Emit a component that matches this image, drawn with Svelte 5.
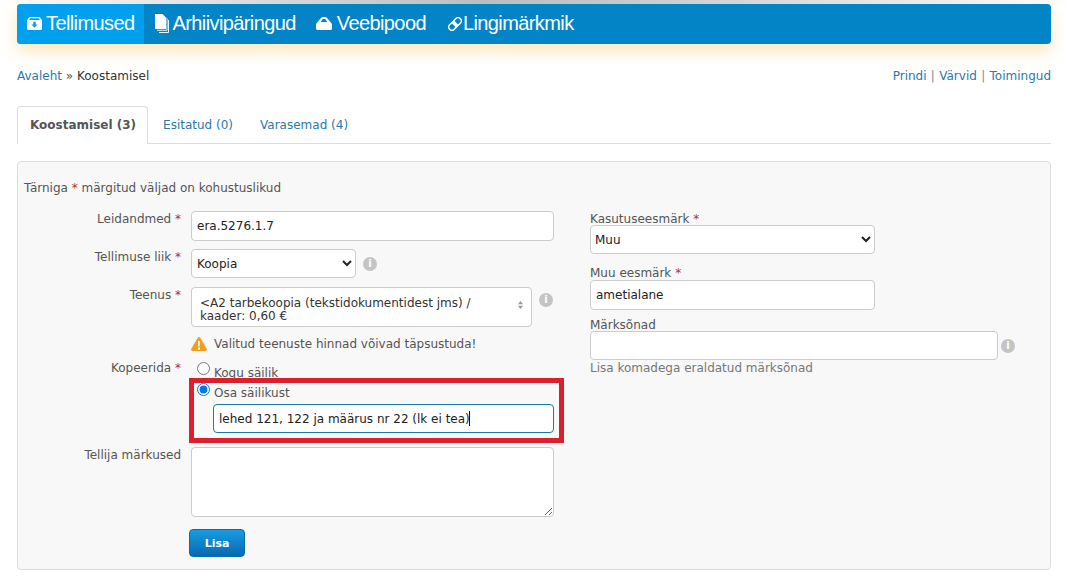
<script>
	const required = '*';
</script>

<div class="top-fade"></div>
<div class="page">
	<nav class="mainnav">
		<a class="item active" href="#t">
			<svg viewBox="0 0 15 13" width="15" height="13"><path fill="#fff" fill-rule="evenodd" d="M2.500 0h10L15 3v8.500A1.500 1.500 0 0 1 13.500 13h-12A1.500 1.500 0 0 1 0 11.500V3zM3 1.200 2.200 3h10.600L12 1.200z"/><path fill="#00a0ef" d="M6.300 4.800h2.400v2.700h1.800L7.500 10.800 4.500 7.500h1.800z"/></svg>
			Tellimused
		</a>
		<a class="item second" href="#a">
			<svg viewBox="0 0 14 19" width="14" height="19"><path fill="#fff" d="M0 0h7.500L11 3.500V15H0z"/><path fill="none" stroke="#fff" stroke-width=".9" d="M12 4v12.300H2M13.500 6v12.500H4"/></svg>
			Arhiivipäringud
		</a>
		<a class="item" href="#v">
			<svg class="ic-shop" viewBox="0 0 16 13" width="16" height="13"><path fill="#fff" fill-rule="evenodd" d="M0 7 4.500 1.500Q5.500 0 7 0h2q1.500 0 2.500 1.500L16 7v4.500q0 1.500-1.500 1.500h-13Q0 13 0 11.500zM4.800 5h6.400L9.800 2.800Q9.400 2 8.600 2H7.400q-.8 0-1.200.8z"/></svg>
			Veebipood
		</a>
		<a class="item" href="#l">
			<svg class="ic-link" viewBox="0 0 14 14" width="14" height="14"><g transform="rotate(-45 7 7)"><rect x="-.5" y="3.800" width="15" height="6.400" rx="3.200" fill="none" stroke="#fff" stroke-width="1.500"/><rect x="5.200" y="3.800" width="3.600" height="6.400" fill="#fff"/></g></svg>
			Lingimärkmik
		</a>
	</nav>

	<div class="crumbs">
		<div><a href="#h">Avaleht</a> » <span class="here">Koostamisel</span></div>
		<div class="actions"><a href="#p">Prindi</a> <i>|</i> <a href="#c">Värvid</a> <i>|</i> <a href="#m">Toimingud</a></div>
	</div>

	<div class="tabs">
		<span class="tab current">Koostamisel (3)</span>
		<a class="tab" href="#e">Esitatud (0)</a>
		<a class="tab" href="#v">Varasemad (4)</a>
	</div>

	<section class="panel">
		<p class="note">Tärniga <span class="req">{required}</span> märgitud väljad on kohustuslikud</p>
		<div class="cols">
			<div class="left">
				<div class="row">
					<label for="find">Leidandmed <span class="req">*</span></label>
					<input id="find" class="w-full" value="era.5276.1.7" />
				</div>
				<div class="row r-type">
					<label for="type">Tellimuse liik <span class="req">*</span></label>
					<div class="with-info">
						<select id="type" class="w-type"><option>Koopia</option></select>
						<span class="info">i</span>
					</div>
				</div>
				<div class="row r-service">
					<span class="lbl">Teenus <span class="req">*</span></span>
					<div class="with-info top">
						<div class="service">
							<span>&lt;A2 tarbekoopia (tekstidokumentidest jms) / kaader: 0,60 €</span>
							<svg viewBox="0 0 7 11" width="5" height="8"><path fill="#999" d="M3.500 0 7 4.500H0zM3.500 11 0 6.500h7z"/></svg>
						</div>
						<span class="info">i</span>
					</div>
				</div>
				<div class="row r-warn">
					<span></span>
					<div class="warn">
						<svg viewBox="0 0 16 14" width="16" height="14"><path fill="#f0a020" d="M8 0q.8 0 1.300.8l6.400 11q.7 1.700-1 2.200H1.300q-1.700-.5-1-2.200L6.700.8Q7.200 0 8 0z"/><path fill="#fff" d="M7 4h2l-.3 5.500H7.300zM7 10.500h2V12.500H7z"/></svg>
						Valitud teenuste hinnad võivad täpsustuda!
					</div>
				</div>
				<div class="row r-copy">
					<span class="lbl">Kopeerida <span class="req">*</span></span>
					<div class="options">
						<label class="radio first"><input type="radio" name="copy" /> <span>Kogu säilik</span></label>
						<label class="radio second"><input type="radio" name="copy" checked /> <span>Osa säilikust</span></label>
						<div class="part">
							<input value="lehed 121, 122 ja määrus nr 22 (lk ei tea)" />
							<span class="caret"></span>
						</div>
						<div class="highlight"></div>
					</div>
				</div>
				<div class="row r-notes">
					<label for="notes">Tellija märkused</label>
					<textarea id="notes"></textarea>
				</div>
				<button class="submit">Lisa</button>
			</div>

			<div class="right">
				<label for="use">Kasutuseesmärk <span class="req">*</span></label>
				<select id="use" class="w-right"><option>Muu</option></select>
				<label for="other" class="gap-a">Muu eesmärk <span class="req">*</span></label>
				<input id="other" class="w-right tall" value="ametialane" />
				<label for="tags" class="gap-b">Märksõnad</label>
				<div class="with-info tags">
					<input id="tags" class="w-tags" />
					<span class="info">i</span>
				</div>
				<span class="hint">Lisa komadega eraldatud märksõnad</span>
			</div>
		</div>
	</section>
</div>

<style>
	:global(body) {
		background: #fff;
		font-family: 'DejaVu Sans', sans-serif;
		font-size: 12px;
		color: #555;
	}

	a {
		color: #2a7aa8;
		text-decoration: none;
	}

	.top-fade {
		height: 4px;
		background: linear-gradient(to right, #fff 0%, #b9bec2 45%, #c2c6c9 55%, #fff 100%);
	}

	.page {
		margin: 0 20px 0 17px;
		height: 577px;
	}

	.mainnav {
		display: flex;
		height: 40px;
		background: #0284c7;
		border-radius: 4px;
		overflow: hidden;
		box-shadow: 0 7px 16px rgba(250, 210, 120, 0.5);
		font-family: 'Liberation Sans', sans-serif;
		font-size: 20px;
		letter-spacing: -0.6px;
	}

	.mainnav .item {
		display: flex;
		align-items: center;
		gap: 4px;
		padding: 0 10px 1px;
		color: #fff;
	}

	.mainnav .active {
		background: #00a0ef;
	}

	.mainnav .second {
		padding-left: 11px;
		gap: 3px;
	}

	.ic-shop {
		margin-right: 1px;
	}

	.ic-link {
		margin: 0 -3px 0 2px;
	}

	.crumbs {
		display: flex;
		justify-content: space-between;
		margin-top: 25px;
		line-height: 15px;
	}

	.here {
		color: #333;
	}

	.actions {
		color: #888;
	}

	.actions i {
		font-style: normal;
		margin: 0 0.5px;
	}

	.tabs {
		display: flex;
		height: 37px;
		margin-top: 22px;
		border-bottom: 1px solid #ddd;
	}

	.tab {
		padding: 12px 13px 0;
		line-height: 15px;
		margin-right: 1px;
	}

	.tab.current {
		height: 38px;
		box-sizing: border-box;
		background: #fff;
		border: 1px solid #ddd;
		border-bottom: 0;
		border-radius: 4px 4px 0 0;
		font-weight: bold;
		color: #555;
		padding: 11px 11px 0 12px;
		margin-right: 2px;
	}

	.panel {
		margin-top: 17px;
		height: 409px;
		box-sizing: border-box;
		background: #f8f8f8;
		border: 1px solid #ddd;
		border-radius: 4px;
		padding: 19px 6px 0;
	}

	.note {
		margin: 0;
		line-height: 15px;
	}

	.req {
		color: #a33;
	}

	.cols {
		display: flex;
		margin-top: 15px;
	}

	.left {
		width: 566px;
	}

	.row {
		display: grid;
		grid-template-columns: 157px auto;
		column-gap: 10px;
		justify-content: start;
	}

	.row label:first-child,
	.lbl {
		text-align: right;
		line-height: 15px;
		padding-top: 1px;
	}

	input:not([type='radio']),
	select,
	textarea {
		box-sizing: border-box;
		background: #fff;
		border: 1px solid #ccc;
		border-radius: 4px;
		font: inherit;
		color: #222;
		margin: 0;
		padding: 0 5px;
		outline: none;
	}

	select {
		padding: 0;
	}

	.w-full {
		width: 363px;
		height: 30px;
	}

	.r-type {
		margin-top: 8px;
	}

	.w-type {
		width: 165px;
		height: 29px;
		padding-left: 1px;
	}

	.with-info {
		display: flex;
		align-items: center;
		gap: 7px;
	}

	.with-info.top {
		align-items: flex-start;
	}

	.with-info.top .info {
		margin-top: 6px;
	}

	.info {
		width: 14px;
		height: 14px;
		border-radius: 50%;
		background: #c4c4c4;
		color: #fff;
		font-size: 10px;
		font-weight: bold;
		line-height: 14px;
		text-align: center;
	}

	.r-service {
		margin-top: 9px;
	}

	.service {
		display: flex;
		align-items: center;
		justify-content: space-between;
		width: 341px;
		height: 40px;
		box-sizing: border-box;
		background: #fff;
		border: 1px solid #ccc;
		border-radius: 4px;
		padding: 5px 8px 0;
		line-height: 13px;
		color: #333;
	}

	.service span {
		width: 310px;
	}

	.service svg {
		margin-top: -9px;
	}

	.r-warn {
		margin-top: 9px;
	}

	.warn {
		display: flex;
		align-items: center;
		gap: 7px;
		height: 16px;
	}

	.r-copy {
		margin-top: 8px;
	}

	.options {
		position: relative;
		display: flex;
		flex-direction: column;
		align-items: flex-start;
		width: 363px;
		padding-top: 1px;
	}

	.radio {
		display: flex;
		align-items: flex-start;
		gap: 4px;
		line-height: 15px;
		margin-left: 6px;
		height: 21px;
	}

	.radio input {
		width: 13px;
		height: 13px;
		margin: 0;
		accent-color: #0b74e5;
	}

	.radio.first span {
		padding-top: 4px;
	}

	.radio.second {
		height: 22px;
	}

	.radio.second span {
		padding-top: 3px;
	}

	.part {
		position: relative;
		width: 341px;
		height: 29px;
		margin: -1px 0 0 22px;
	}

	.part input {
		display: block;
		width: 100%;
		height: 100%;
		border-color: #1a7f9c !important;
	}

	/* text cursor in the focused field */
	.caret {
		position: absolute;
		left: 256px;
		top: 7px;
		width: 1px;
		height: 15px;
		background: #111;
	}

	/* red annotation drawn over the screenshot */
	.highlight {
		position: absolute;
		left: -2px;
		top: 18px;
		width: 375px;
		height: 65px;
		box-sizing: border-box;
		border: 5px solid #d9202c;
		pointer-events: none;
	}

	.r-notes {
		margin-top: 14px;
	}

	textarea {
		display: block;
		width: 363px;
		height: 70px;
	}

	.submit {
		display: block;
		margin: 12px 0 0 165px;
		width: 56px;
		height: 28px;
		border: 1px solid #0a6bab;
		border-radius: 4px;
		background: linear-gradient(to bottom, #1a9ce0, #0669b2);
		color: #fff;
		font: inherit;
		font-size: 11px;
		font-weight: bold;
	}

	.right {
		display: flex;
		flex-direction: column;
		align-items: flex-start;
		padding-top: 1px;
	}

	.right label {
		line-height: 15px;
	}

	.w-right {
		width: 285px;
		height: 29px;
		margin-top: -2px !important;
	}

	.w-right.tall {
		height: 30px;
		margin-top: -1px !important;
	}

	.gap-a {
		margin-top: 12px;
	}

	.gap-b {
		margin-top: 8px;
	}

	.with-info.tags {
		margin-top: -2px;
		gap: 3px;
	}

	.w-tags {
		width: 408px;
		height: 29px;
	}

	.hint {
		margin-top: 1px;
		line-height: 15px;
		color: #777;
	}
</style>
